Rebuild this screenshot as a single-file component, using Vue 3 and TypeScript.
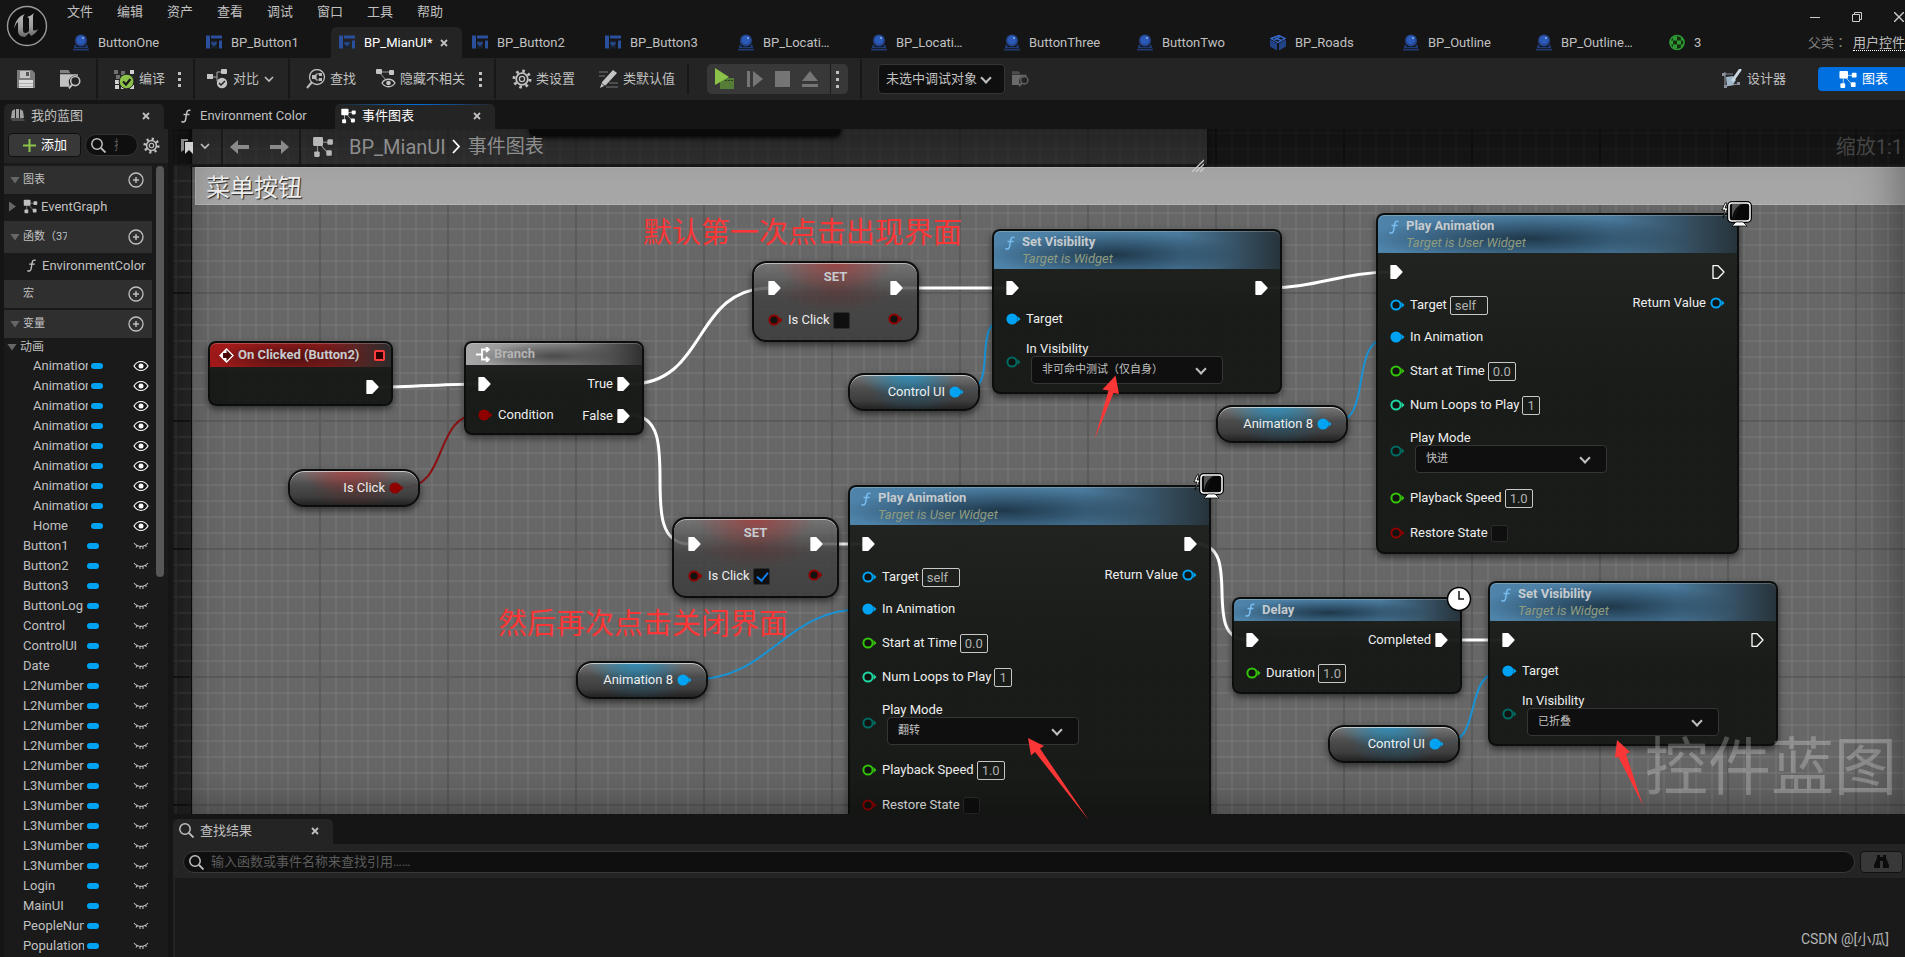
<script setup lang="ts">
import { ref } from 'vue'

type Field =
  | { type: 'text'; value: string; width: number }
  | { type: 'check'; checked: boolean }
  | { type: 'combo'; value: string }

interface Row {
  h: number
  pin: 'exec' | 'data'
  color?: string
  filled?: boolean
  label?: string
  field?: Field
}

interface GraphNode {
  id: string
  kind: 'func' | 'event' | 'branch' | 'set' | 'bool' | 'object'
  x: number
  y: number
  w: number
  h: number
  title?: string
  sub?: string
  badge?: 'client' | 'clock'
  left: Row[]
  right: Row[]
}

const BLUE = '#00a2f2'
const RED = '#8f0000'
const GREEN = '#35c40a'
const MINT = '#20d6a0'
const TEAL = '#006b62'

const menus = ['文件', '编辑', '资产', '查看', '调试', '窗口', '工具', '帮助']
const docTabs = [
  { name: 'ButtonOne', icon: 'actor' },
  { name: 'BP_Button1', icon: 'widget' },
  { name: 'BP_MianUI*', icon: 'widget', active: true },
  { name: 'BP_Button2', icon: 'widget' },
  { name: 'BP_Button3', icon: 'widget' },
  { name: 'BP_Locati…', icon: 'actor' },
  { name: 'BP_Locati…', icon: 'actor' },
  { name: 'ButtonThree', icon: 'actor' },
  { name: 'ButtonTwo', icon: 'actor' },
  { name: 'BP_Roads', icon: 'blueprint' },
  { name: 'BP_Outline', icon: 'actor' },
  { name: 'BP_Outline…', icon: 'actor' },
  { name: '3', icon: 'level' },
]

const animations = [...Array(8).fill('Animation'), 'Home'] as string[]
const variables = [
  'Button1', 'Button2', 'Button3', 'ButtonLog', 'Control', 'ControlUI', 'Date',
  ...Array(5).fill('L2Number'), ...Array(5).fill('L3Number'),
  'Login', 'MainUI', 'PeopleNum', 'Population',
] as string[]

const exec = (filled = true, label?: string, h = 38): Row => ({ h, pin: 'exec', filled, label })

const visibilityNode = (id: string, x: number, y: number, value: string, linked: boolean): GraphNode => ({
  id, kind: 'func', x, y, w: 290, h: 165, title: 'Set Visibility', sub: 'Target is Widget',
  left: [
    exec(),
    { h: 23, pin: 'data', color: BLUE, filled: true, label: 'Target' },
    { h: 62, pin: 'data', color: TEAL, label: 'In Visibility', field: { type: 'combo', value } },
  ],
  right: [exec(linked)],
})

const playNode = (id: string, x: number, y: number, mode: string, linked: boolean): GraphNode => ({
  id, kind: 'func', x, y, w: 363, h: 341, title: 'Play Animation', sub: 'Target is User Widget', badge: 'client',
  left: [
    exec(),
    { h: 28, pin: 'data', color: BLUE, label: 'Target', field: { type: 'text', value: 'self', width: 38 } },
    { h: 36, pin: 'data', color: BLUE, filled: true, label: 'In Animation' },
    { h: 32, pin: 'data', color: GREEN, label: 'Start at Time', field: { type: 'text', value: '0.0', width: 28 } },
    { h: 36, pin: 'data', color: MINT, label: 'Num Loops to Play', field: { type: 'text', value: '1', width: 18 } },
    { h: 58, pin: 'data', color: TEAL, label: 'Play Mode', field: { type: 'combo', value: mode } },
    { h: 34, pin: 'data', color: GREEN, label: 'Playback Speed', field: { type: 'text', value: '1.0', width: 28 } },
    { h: 36, pin: 'data', color: RED, label: 'Restore State', field: { type: 'check', checked: false } },
  ],
  right: [exec(linked), { h: 24, pin: 'data', color: BLUE, label: 'Return Value' }],
})

const setNode = (id: string, x: number, y: number, checked: boolean): GraphNode => ({
  id, kind: 'set', x, y, w: 167, h: 81, title: 'SET',
  left: [exec(true, undefined, 34), { h: 30, pin: 'data', color: RED, label: 'Is Click', field: { type: 'check', checked } }],
  right: [exec(true, undefined, 34), { h: 28, pin: 'data', color: RED }],
})

const getNode = (id: string, kind: 'bool' | 'object', x: number, y: number, label: string): GraphNode => ({
  id, kind, x, y, w: 132, h: 38, left: [],
  right: [{ h: 34, pin: 'data', color: kind === 'bool' ? RED : BLUE, filled: true, label }],
})

const nodes = ref<GraphNode[]>([
  { id: 'click', kind: 'event', x: 208, y: 341, w: 185, h: 65, title: 'On Clicked (Button2)', left: [], right: [exec(true, undefined, 40)] },
  {
    id: 'branch', kind: 'branch', x: 464, y: 341, w: 180, h: 94, title: 'Branch',
    left: [exec(), { h: 24, pin: 'data', color: RED, filled: true, label: 'Condition' }],
    right: [exec(true, 'True'), exec(true, 'False', 26)],
  },
  getNode('isclick', 'bool', 288, 469, 'Is Click'),
  setNode('set1', 752, 261, false),
  getNode('ui1', 'object', 848, 373, 'Control UI'),
  visibilityNode('vis1', 992, 229, '非可命中测试（仅自身）', true),
  getNode('anim1', 'object', 1216, 405, 'Animation 8'),
  playNode('play1', 1376, 213, '快进', false),
  setNode('set2', 672, 517, true),
  getNode('anim2', 'object', 576, 661, 'Animation 8'),
  playNode('play2', 848, 485, '翻转', true),
  {
    id: 'delay', kind: 'func', x: 1232, y: 597, w: 230, h: 97, title: 'Delay', badge: 'clock',
    left: [exec(), { h: 28, pin: 'data', color: GREEN, label: 'Duration', field: { type: 'text', value: '1.0', width: 28 } }],
    right: [exec(true, 'Completed')],
  },
  getNode('ui2', 'object', 1328, 725, 'Control UI'),
  visibilityNode('vis2', 1488, 581, '已折叠', false),
])

interface Wire { from: [number, number]; to: [number, number]; bend: number; color?: string }
const wires: Wire[] = [
  { from: [378, 387], to: [480, 384], bend: 30 },
  { from: [630, 384], to: [770, 288], bend: 78 },
  { from: [630, 415], to: [690, 544], bend: 60 },
  { from: [902, 288], to: [1008, 288], bend: 30 },
  { from: [1267, 288], to: [1392, 272], bend: 50 },
  { from: [822, 544], to: [864, 544], bend: 10 },
  { from: [1196, 544], to: [1248, 640], bend: 50 },
  { from: [1447, 640], to: [1504, 640], bend: 10 },
  { from: [402, 488], to: [480, 414], bend: 48, color: '#8d1010' },
  { from: [962, 392], to: [1008, 319], bend: 42, color: '#1793d6' },
  { from: [1330, 424], to: [1392, 337], bend: 48, color: '#1793d6' },
  { from: [690, 680], to: [864, 609], bend: 82, color: '#1793d6' },
  { from: [1442, 744], to: [1504, 671], bend: 44, color: '#1793d6' },
]
const wirePath = (w: Wire) =>
  `M${w.from[0]} ${w.from[1]}C${w.from[0] + w.bend} ${w.from[1]} ${w.to[0] - w.bend} ${w.to[1]} ${w.to[0]} ${w.to[1]}`
</script>

<template>
  <div class="editor">
    <svg class="defs" aria-hidden="true">
      <symbol id="i-actor" viewBox="0 0 16 17"><path d="M2 10l2 3h8l2-3 2 6.500H0z" fill="#203c78" /><path d="M1 14.500h14" stroke="#151515" stroke-width=".8" /><circle cx="8" cy="6.500" r="6" fill="#25458c" /><circle cx="8" cy="6" r="4.300" fill="#2b5ab8" /><circle cx="10" cy="4" r="1" fill="#8fb0ee" /></symbol>
      <symbol id="i-widget" viewBox="0 0 16 16"><path d="M0 1h4v13H0zM5 1h11v3H5zM13 6h3v8h-3z" fill="#2a4f9c" /><path d="M5 6h6v8H5z" fill="#19202e" /><path d="M8 12L5 9l1-2 2 1 2-1 1 2z" fill="#264789" /></symbol>
      <symbol id="i-blueprint" viewBox="0 0 16 16"><path d="M0 5l7 4v7l-7-4zM16 5L9 9v7l7-4z" fill="#234387" /><path d="M1 4l8-3 6 3-7 4zM5 3l6 3M10 2L4 6" fill="none" stroke="#3668cc" stroke-width="1.4" /></symbol>
      <symbol id="i-level" viewBox="0 0 16 16"><circle cx="8" cy="8" r="7" fill="#14300f" stroke="#2f9a35" stroke-width="1.6" /><path d="M4 2h4v4H4zM8 6h4v4H8zM4 10h4v4H4zM1 6h3v4H1zM12 2l3 4h-3zM12 10h3l-3 4z" fill="#2f9a35" /></symbol>
      <symbol id="i-close" viewBox="0 0 8 8"><path d="M1 1l6 6M7 1L1 7" stroke="currentColor" stroke-width="1.8" /></symbol>
      <symbol id="i-chev" viewBox="0 0 10 7"><path d="M1 1l4 4 4-4" fill="none" stroke="currentColor" stroke-width="1.6" /></symbol>
      <symbol id="i-search" viewBox="0 0 15 15"><circle cx="6" cy="6" r="5.200" fill="none" stroke="currentColor" stroke-width="1.500" /><path d="M10 10l4.500 4.500" stroke="currentColor" stroke-width="1.800" /></symbol>
      <symbol id="i-gear" viewBox="0 0 20 20"><circle cx="10" cy="10" r="8" fill="none" stroke="currentColor" stroke-width="3" stroke-dasharray="2.600 3.680" /><circle cx="10" cy="10" r="5.800" fill="none" stroke="currentColor" stroke-width="1.800" /><circle cx="10" cy="10" r="2.600" fill="none" stroke="currentColor" stroke-width="1.300" /></symbol>
      <symbol id="i-graph" viewBox="0 0 20 20"><path d="M5 5l11 1M5 5v11M5 5l10 11" stroke="currentColor" stroke-width="1" opacity=".7" /><rect x="1" y="1" width="9" height="8" rx="1" fill="currentColor" /><rect x="14" y="3" width="5" height="5" rx="1" fill="currentColor" /><rect x="2" y="14" width="5" height="5" rx="1" fill="currentColor" /><rect x="13" y="13" width="5" height="5" rx="1" fill="currentColor" /></symbol>
      <symbol id="i-func" viewBox="0 0 10 14"><path d="M9.500 1.500C7 .5 6 2 5.700 4L4.600 10.500C4.200 13 2.500 13.500.5 12.500M2.500 5.500h6" fill="none" stroke="currentColor" stroke-width="1.500" /></symbol>
      <symbol id="i-folder" viewBox="0 0 20 18"><path d="M0 0h8l2 3H0z" fill="currentColor" opacity=".6" /><path d="M0 4h17v2a6 6 0 0 0-8 8v2H0z" fill="currentColor" /><circle cx="14.500" cy="10.500" r="4.300" fill="none" stroke="currentColor" stroke-width="1.500" /><path d="M12 13.500L8.500 17.500" stroke="currentColor" stroke-width="1.800" /></symbol>
      <symbol id="i-plus" viewBox="0 0 16 16"><circle cx="8" cy="8" r="7" fill="none" stroke="currentColor" stroke-width="1.300" /><path d="M8 5v6M5 8h6" stroke="currentColor" stroke-width="1.400" /></symbol>
      <symbol id="i-eye" viewBox="0 0 16 12"><path d="M1 6C4.500 0 11.500 0 15 6C11.500 12 4.500 12 1 6z" fill="none" stroke="#fff" stroke-width="1.200" /><circle cx="8" cy="6" r="2.500" fill="#fff" /></symbol>
      <symbol id="i-lid" viewBox="0 0 16 8"><path d="M1 1C4.500 5.500 11.500 5.500 15 1M4 3.500L3 5.500M7 4.500V7M10 4.500V7M12.500 3.500L13.500 5" fill="none" stroke="#c0c0c0" stroke-width="1.100" /></symbol>
      <symbol id="i-arrow" viewBox="0 0 20 16"><path d="M0 8l8-7v5h11v4H8v5z" fill="currentColor" /></symbol>
    </svg>

    <header class="top">
      <svg class="logo" viewBox="0 0 42 42">
        <defs><linearGradient id="steel" x1="0" y1="0" x2="0" y2="1"><stop offset="0" stop-color="#b8b8b8" /><stop offset=".6" stop-color="#999" /><stop offset="1" stop-color="#666" /></linearGradient></defs>
        <circle cx="21" cy="21" r="19.500" fill="#0f0f0f" stroke="#9a9a9a" stroke-width="1.400" />
        <path d="M8 24C9 16 13 11 19 9c-1 1-2 2-2 4v12c0 2 1 3 2 3 2 0 3-1 4-2V14c0-1-1-2-2-2 3-1 5-2 7-4-1 2-1 3-1 5v11c0 2 2 2 5 0-2 4-5 6-7 7l-2-3-4 4C14 32 12 29 12 26V18c0-2-2 1-4 6z" fill="url(#steel)" />
      </svg>
      <div class="top-main">
        <nav class="menu">
          <button v-for="m in menus" :key="m" type="button">{{ m }}</button>
          <div class="win">
            <button type="button" aria-label="最小化"><svg width="10" height="10"><path d="M0 5.500h10" stroke="#ccc" /></svg></button>
            <button type="button" aria-label="还原"><svg width="10" height="10"><path d="M2.500 2.500v-2h7v7h-2M.5 2.500h7v7h-7z" fill="none" stroke="#ccc" /></svg></button>
            <button type="button" aria-label="关闭"><svg width="10" height="10"><path d="M0 0l10 10M10 0L0 10" stroke="#ccc" stroke-width="1.400" /></svg></button>
          </div>
        </nav>
        <div class="docs">
          <button v-for="(t, i) in docTabs" :key="i" type="button" class="doc" :class="{ active: t.active }">
            <svg width="16" height="17"><use :href="'#i-' + t.icon" /></svg>
            <span>{{ t.name }}</span>
            <svg v-if="t.active" class="x" width="8" height="8"><use href="#i-close" /></svg>
          </button>
          <div class="parent"><span>父类：</span><a href="#">用户控件</a></div>
        </div>
      </div>
    </header>

    <div class="toolbar">
      <div class="grp g1">
        <button type="button" aria-label="保存"><svg width="18" height="18"><path d="M0 0h15l3 3v15H0z" fill="#7c7c7c" /><path d="M3 1h10v7H3z" fill="#c4c4c4" /><path d="M9 2h3v4H9z" fill="#555" /><path d="M2 10h14v8H2z" fill="#dcdcdc" /><path d="M2 13.500h14M2 16.500h14" stroke="#b0b0b0" /></svg></button>
        <button type="button" aria-label="浏览"><svg width="21" height="19"><use href="#i-folder" /></svg></button>
      </div>
      <div class="grp g2">
        <button type="button"><svg width="21" height="21"><path d="M0 1h4v4H0zM7 2h4v4H7zM2 6h4v4H2z" fill="#707070" /><path d="M16 1h4v4h-4zM1 11h4v4H1zM1 16h4v4H1zM7 16h4v4H7zM16 16h4v4h-4z" fill="#d0d0d0" /><circle cx="12.500" cy="12.500" r="7.300" fill="#8bc34a" stroke="#242424" /><path d="M9 12.500l3 3 4.500-5.500" fill="none" stroke="#1a1a1a" stroke-width="2.200" /></svg>编译</button>
        <svg width="4" height="16"><path d="M0 1h3v3H0zM0 7h3v3H0zM0 13h3v3H0z" fill="#c0c0c0" /></svg>
      </div>
      <div class="grp g3">
        <button type="button"><svg width="22" height="20"><path d="M5 8h5V3h5M10 8v4" fill="none" stroke="#aaa" /><rect y="5" width="6" height="5" fill="#c4c4c4" /><rect x="14" width="6" height="5" rx="1" fill="#c4c4c4" /><circle cx="15" cy="14" r="5.200" fill="#c4c4c4" /><path d="M12 14l2 2 4-4" fill="none" stroke="#222" stroke-width="1.500" /></svg>对比<svg class="cv" width="10" height="7"><use href="#i-chev" /></svg></button>
      </div>
      <div class="grp g4">
        <button type="button"><svg width="20" height="20"><circle cx="11" cy="8" r="7.500" fill="none" stroke="#bbb" stroke-width="1.300" /><path d="M6 13l-5 6" stroke="#bbb" stroke-width="2" /><path d="M7 8h3M10 5h4M10 11h4M10 5v6" fill="none" stroke="#bbb" stroke-width="1.200" /><path d="M6 6h4v4H6zM13 4h3v3h-3zM13 9h3v3h-3z" fill="#bbb" /></svg>查找</button>
        <button type="button"><svg width="20" height="20"><path d="M3 3h14M3 3l7 8" stroke="#999" /><rect width="6" height="5" rx="1" fill="#c4c4c4" /><rect x="13" y="1" width="5" height="5" rx="1" fill="#c4c4c4" /><path d="M6 14c3-5 10-5 13 0-3 5-10 5-13 0z" fill="#222" stroke="#c4c4c4" stroke-width="1.300" /><circle cx="12.500" cy="14" r="2.300" fill="#c4c4c4" /></svg>隐藏不相关</button>
        <svg width="4" height="16"><path d="M0 1h3v3H0zM0 7h3v3H0zM0 13h3v3H0z" fill="#c0c0c0" /></svg>
      </div>
      <div class="grp g5">
        <button type="button"><svg width="20" height="20"><use href="#i-gear" /></svg>类设置</button>
        <button type="button"><svg width="20" height="20"><path d="M0 3h9M0 7h6M10 14h9M7 18h12" stroke="#777" /><path d="M14 1l4 3L7 16l-6 3 2-6z" fill="#c4c4c4" /><path d="M2 14l4 3" stroke="#444" /></svg>类默认值</button>
      </div>
      <div class="play">
        <button type="button" aria-label="播放"><svg width="20" height="22"><path d="M5 10h14v11H5z" fill="#567d38" /><path d="M0 0l14 9L0 17z" fill="#8bc34a" /><path d="M10 12.500h9" stroke="#2c3a22" stroke-dasharray="2 1" /></svg></button>
        <button type="button" aria-label="步进"><svg width="16" height="16"><path d="M0 0h3v16H0zM6 0l10 8-10 8z" fill="#757575" /></svg></button>
        <button type="button" aria-label="停止"><svg width="15" height="16"><path d="M0 0h15v16H0z" fill="#757575" /></svg></button>
        <button type="button" aria-label="弹出"><svg width="16" height="16"><path d="M8 0l8 10H0zM0 13h16v3H0z" fill="#757575" /></svg></button>
        <button type="button" class="more" aria-label="选项"><svg width="4" height="18"><path d="M0 1h3v3H0zM0 8h3v3H0zM0 15h3v3H0z" fill="#c0c0c0" /></svg></button>
      </div>
      <div class="debug">
        <label class="combo big"><select aria-label="调试对象"><option>未选中调试对象</option></select></label>
        <svg class="dim" width="17" height="16"><use href="#i-folder" /></svg>
      </div>
      <div class="modes">
        <button type="button"><svg width="21" height="20"><path d="M1 5h10M3 3v14l13-2" fill="none" stroke="#8a919a" stroke-width="1.200" /><path d="M0 4h3v3H0zM2 16h3v3H2zM15 13h3v3h-3z" fill="#8a919a" /><path d="M4 8l7-1 3 4-3 5-6 1z" fill="#9fb6c8" /><path d="M11 11l7-10" stroke="#ccd8e2" stroke-width="3" stroke-linecap="round" /></svg>设计器</button>
        <button type="button" class="on"><svg width="20" height="19"><use href="#i-graph" /></svg>图表</button>
      </div>
    </div>

    <main class="main">
      <aside class="side">
        <div class="ptab">
          <svg width="15" height="15"><path d="M2 3l3-2v9H1zM6 1h3v9H6zM10 1l3 2 1 7h-4z" fill="#a2a2a2" /><path d="M0 10h12l3 2-1 1H2z" fill="#4c4c4c" /></svg>
          <span>我的蓝图</span><svg class="x" width="8" height="8"><use href="#i-close" /></svg>
        </div>
        <div class="side-tools">
          <button type="button" class="add"><svg width="13" height="13"><path d="M6.500 0v13M0 6.500h13" stroke="#8bc34a" stroke-width="2" /></svg>添加</button>
          <label class="find"><svg width="15" height="15"><use href="#i-search" /></svg><input type="text" aria-label="搜索" placeholder="搜索" /></label>
          <svg class="gear" width="17" height="17"><use href="#i-gear" /></svg>
        </div>
        <div class="side-body">
          <div class="tree">
            <div class="cat"><i class="tri" /><span>图表</span><button type="button" aria-label="添加图表"><svg width="16" height="16"><use href="#i-plus" /></svg></button></div>
            <div class="leaf"><i class="tri side-tri" /><svg width="15" height="15"><use href="#i-graph" /></svg><span>EventGraph</span></div>
            <div class="cat tall"><i class="tri" /><span>函数（37可覆盖）</span><button type="button" aria-label="添加函数"><svg width="16" height="16"><use href="#i-plus" /></svg></button></div>
            <div class="leaf"><i class="tri none" /><svg width="15" height="13"><use href="#i-func" /></svg><span>EnvironmentColor</span></div>
            <div class="cat"><i class="tri none" /><span>宏</span><button type="button" aria-label="添加宏"><svg width="16" height="16"><use href="#i-plus" /></svg></button></div>
            <div class="cat last"><i class="tri" /><span>变量</span><button type="button" aria-label="添加变量"><svg width="16" height="16"><use href="#i-plus" /></svg></button></div>
            <div class="sub"><i class="tri" /><span>动画</span></div>
            <div v-for="(v, i) in animations" :key="'a' + i" class="var nested"><span>{{ v }}</span><b /><svg width="16" height="12"><use href="#i-eye" /></svg></div>
            <div v-for="(v, i) in variables" :key="'v' + i" class="var"><span>{{ v }}</span><b /><svg width="16" height="8"><use href="#i-lid" /></svg></div>
          </div>
          <div class="bar" />
        </div>
      </aside>

      <section class="work">
        <div class="gtabs">
          <button type="button" class="gtab plain"><svg width="10" height="14"><use href="#i-func" /></svg><span>Environment Color</span></button>
          <button type="button" class="gtab cur"><svg width="17" height="16"><use href="#i-graph" /></svg><span>事件图表</span><svg class="x" width="8" height="8"><use href="#i-close" /></svg></button>
        </div>

        <div class="canvas">
          <div class="world">
            <div class="comment upper" />
            <div class="stub" />
            <div class="comment lower"><h2>菜单按钮</h2></div>
            <svg class="wires" width="1920" height="830">
              <path v-for="(w, i) in wires" :key="i" :d="wirePath(w)" fill="none" :stroke="w.color || '#fff'" :stroke-width="w.color ? 2 : 3" />
            </svg>
            <article v-for="n in nodes" :key="n.id" class="node" :class="n.kind" :style="{ left: n.x + 'px', top: n.y + 'px', width: n.w + 'px', height: n.h + 'px' }">
              <header v-if="n.title" :class="{ two: n.sub }">
                <svg v-if="n.kind === 'func'" class="fi" width="10" height="14"><use href="#i-func" /></svg>
                <svg v-if="n.kind === 'event'" width="15" height="15"><path d="M7.500 1L14 7.500 7.500 14 1 7.500z" fill="#4a0808" stroke="#fff" stroke-width="1.300" /><path d="M7.500 1v4L4 5v5l3.500 0v4L1 7.500z" fill="#fff" /></svg>
                <svg v-if="n.kind === 'branch'" width="14" height="15"><path d="M0 7.500h6M12 2.500H6v10h6M10 0l3 2.500L10 5M10 10l3 2.500-3 2.500" fill="none" stroke="#fff" stroke-width="1.800" /></svg>
                <div><strong>{{ n.title }}</strong><em v-if="n.sub">{{ n.sub }}</em></div>
                <i v-if="n.kind === 'event'" class="delegate" />
              </header>
              <div class="pins">
                <div v-for="side in (['left', 'right'] as const)" :key="side" class="col" :class="side">
                  <div v-for="(r, i) in n[side]" :key="i" class="row" :class="{ bottom: r.field?.type === 'combo' }" :style="{ height: r.h + 'px' }">
                    <svg v-if="r.pin === 'exec'" class="pin" width="13" height="14"><path d="M1 .7h5L12 7 6 13.300H1z" :fill="r.filled ? '#fff' : 'none'" stroke="#fff" stroke-width="1.300" stroke-linejoin="round" /></svg>
                    <svg v-else class="pin" width="15" height="12"><circle cx="6" cy="6" r="4.600" :stroke="r.color" stroke-width="2" :fill="r.filled ? r.color : '#101310'" /><path d="M11.500 3l3 3-3 3z" :fill="r.color" /></svg>
                    <label v-if="r.label" :class="{ stacked: r.field?.type === 'combo' }">
                      <span>{{ r.label }}</span>
                      <input v-if="r.field?.type === 'text'" v-model="r.field.value" type="text" class="tx" :style="{ width: r.field.width + 'px' }" />
                      <input v-else-if="r.field?.type === 'check'" v-model="r.field.checked" type="checkbox" class="ck" />
                      <span v-else-if="r.field?.type === 'combo'" class="combo"><select><option>{{ r.field.value }}</option></select></span>
                    </label>
                  </div>
                </div>
              </div>
              <svg v-if="n.badge === 'client'" class="badge client" width="32" height="28"><path d="M5 3L2 10h3l-2 8 5-10H5l2-5z" fill="#fff" stroke="#000" stroke-width=".8" /><rect x="9" y="3" width="21" height="18" rx="3" fill="#050505" stroke="#000" stroke-width="4" /><rect x="9" y="3" width="21" height="18" rx="3" fill="#080808" stroke="#fff" stroke-width="1.500" /><path d="M12 19c1-7 4-12 9-15h-9z" fill="#555" /><path d="M14 19c1-6 3-11 8-15" stroke="#1a1a1a" fill="none" /><path d="M16 22h7l4 4H12z" fill="#fff" stroke="#000" stroke-width=".7" /></svg>
              <svg v-if="n.badge === 'clock'" class="badge clock" width="26" height="26"><circle cx="13" cy="13" r="11.500" fill="#fff" stroke="#000" stroke-width="1.500" /><path d="M13 5v8h5" fill="none" stroke="#111" stroke-width="1.500" /></svg>
            </article>
          </div>
          <div class="vignette" />
          <nav class="crumbs">
            <button type="button" class="mark" aria-label="书签"><svg width="14" height="17"><path d="M1 1h7v2H4v9l-3 2z" fill="#888" /><path d="M5 4h8v12l-4-4-4 4z" fill="#d0d0d0" /></svg><svg width="10" height="7"><use href="#i-chev" /></svg></button>
            <button type="button" class="nav" aria-label="后退"><svg width="20" height="16"><use href="#i-arrow" /></svg></button>
            <button type="button" class="nav fwd" aria-label="前进"><svg width="20" height="16"><use href="#i-arrow" /></svg></button>
            <div class="path"><svg width="24" height="22"><use href="#i-graph" /></svg><a href="#">BP_MianUI</a><svg class="gt" width="9" height="15"><path d="M1 1l6 6.500L1 14" fill="none" stroke="#fff" stroke-width="1.800" /></svg><a href="#">事件图表</a></div>
            <span class="zoom">缩放1:1</span>
          </nav>
          <svg class="grip" width="13" height="13"><path d="M1 13L13 1M5 13l8-8M9 13l4-4" stroke="#ccc" stroke-width="1.300" /></svg>
          <div class="kind">控件蓝图</div>
        </div>

        <div class="results">
          <div class="rtabs"><div class="ptab"><svg width="15" height="15"><use href="#i-search" /></svg><span>查找结果</span><svg class="x" width="8" height="8"><use href="#i-close" /></svg></div></div>
          <div class="rsearch">
            <label><svg width="15" height="15"><use href="#i-search" /></svg><input type="text" aria-label="查找引用" placeholder="输入函数或事件名称来查找引用……" /></label>
            <button type="button" aria-label="查找"><svg width="15" height="14"><path d="M3 0h3v2h3V0h3v3l3 7v3H9V6H6v7H0v-3l3-7z" fill="#0c0c0c" /></svg></button>
          </div>
          <div class="rbody" />
        </div>
      </section>
    </main>

    <div class="notes">
      <p class="n1">默认第一次点击出现界面</p>
      <p class="n2">然后再次点击关闭界面</p>
      <svg width="1700" height="830"><path d="M1115.500 375.500l3.500 18.500-5.500-1L1094.500 439.500l14-49-6-1zM1028 738l16 8-4 2.500L1089 820.500 1035 752l-4 3.500zM1617 740l13 12-4 2L1643 805.500 1618.500 757l-3.500.5z" fill="#fb3636" /></svg>
      <p class="sign">CSDN @[小瓜]</p>
    </div>
  </div>
</template>

<style>
body { background: #151515; overflow: hidden; }
</style>

<style scoped>
.editor { position: relative; display: flex; flex-direction: column; height: 100vh; overflow: hidden; background: #151515; color: #c0c0c0; font: 13px/16px Roboto, "Noto Sans CJK SC", sans-serif; }
.editor * { box-sizing: border-box; }
.defs { position: absolute; width: 0; height: 0; }
button { display: flex; align-items: center; padding: 0; border: 0; background: none; color: inherit; font: inherit; white-space: nowrap; }
input, select { font: inherit; color: inherit; outline: 0; }
a { color: inherit; text-decoration: none; }
svg { flex: none; }

.top { display: flex; flex: none; height: 58px; }
.logo { width: 42px; height: 42px; margin: 5px 0 0 6px; }
.top-main { flex: 1; min-width: 0; margin-left: 17px; }
.menu { display: flex; height: 27px; padding-left: 2px; }
.menu > button { width: 50px; height: 23px; }
.win { display: flex; gap: 32px; margin-left: auto; padding: 6px 1px 0 0; }
.docs { display: flex; height: 31px; }
.doc { flex: 0 1 133px; min-width: 0; padding-left: 8px; }
.doc span { margin-left: 9px; }
.doc.active { flex-basis: 131px; margin-right: 2px; background: #242424; border-radius: 6px 6px 0 0; color: #fff; }
.doc.active .x { margin-left: auto; margin-right: 14px; color: #c0c0c0; }
.parent { display: flex; align-items: center; flex: 1 0 0; min-width: 98px; justify-content: flex-end; white-space: nowrap; color: #808080; }
.parent span { margin-right: 6px; font-family: Roboto, "Noto Sans CJK TC", sans-serif; }
.parent a { color: #c0c0c0; border-bottom: 1px dotted #fff; line-height: 15px; }

.toolbar { display: flex; flex: none; align-items: center; height: 42px; background: #242424; }
.toolbar button { gap: 4px; }
.grp { display: flex; align-items: center; height: 40px; border-right: 2px solid #171717; }
.g1 { width: 98px; padding-left: 17px; gap: 25px; }
.g2 { width: 97px; padding-left: 16px; gap: 13px; }
.g3 { width: 95px; padding-left: 12px; }
.g3 .cv { margin-left: 1px; }
.g4 { width: 206px; padding-left: 16px; }
.g4 button { margin-right: 20px; }
.g4 button + button { margin-right: 14px; }
.g5 { width: 193px; height: 30px; padding-left: 16px; gap: 24px; }
.play { display: flex; width: 141px; height: 30px; margin-left: 18px; background: #383838; border-radius: 5px; padding-left: 8px; gap: 12px; }
.play .more { margin-left: auto; width: 23px; padding-right: 4px; justify-content: center; border-left: 1px solid #1c1c1c; }
.debug { display: flex; align-items: center; height: 40px; margin-left: 12px; padding-left: 16px; border-left: 2px solid #171717; gap: 7px; }
.dim { opacity: .45; }
.modes { display: flex; align-items: center; margin-left: auto; gap: 32px; }
.modes .on { width: 87px; height: 24px; padding-left: 20px; background: #0070e0; color: #fff; border-radius: 4px 0 0 4px; }

.combo { position: relative; display: block; width: 192px; height: 28px; }
.combo select { appearance: none; width: 100%; height: 100%; padding: 0 24px 0 10px; background: #0f0f0f; border: 1px solid #353535; border-radius: 4px; font-size: 11px; color: #c0c0c0; }
.combo::after { content: ""; position: absolute; right: 18px; top: 9px; width: 6px; height: 6px; border: solid #c0c0c0; border-width: 0 2px 2px 0; transform: rotate(45deg); }
.combo.big { width: 127px; height: 30px; }
.combo.big select { padding: 0 0 0 7px; font-size: 13px; }
.combo.big::after { right: 15px; top: 10px; }

.main { display: flex; flex: 1; min-height: 0; }
.side { display: flex; flex-direction: column; flex: none; width: 164px; margin-left: 4px; padding-top: 4px; }
.ptab { display: flex; align-items: center; flex: none; width: 160px; height: 25px; padding: 0 14px 2px 6px; background: #242424; border-radius: 5px 5px 0 0; }
.ptab span { margin-left: 6px; }
.ptab .x { margin-left: auto; }
.side-tools { display: flex; flex: none; align-items: center; height: 35px; padding: 0 4px 2px; background: #242424; border-bottom: 1px solid #1a1a1a; }
.add { width: 73px; height: 24px; padding-left: 14px; gap: 5px; background: #383838; border: 1px solid #101010; border-radius: 4px; color: #fff; }
.find { display: flex; align-items: center; width: 53px; height: 22px; margin-left: 4px; padding-left: 5px; gap: 8px; background: #0f0f0f; border: 1px solid #333; border-radius: 11px; }
.find input { width: 4px; min-width: 0; padding: 0; border: 0; background: none; }
.find input::placeholder { color: #555; }
.gear { margin-left: 5px; }
.side-body { display: flex; flex: 1; min-height: 0; padding-top: 2px; background: #1a1a1a; }
.tree { width: 148px; flex: none; overflow: hidden; }
.bar { width: 8px; height: 411px; margin-left: 4px; background: #575757; border-radius: 4px; }
.cat { display: flex; align-items: center; height: 28px; padding-left: 6px; background: #2f2f2f; font-size: 11px; }
.cat span { width: 44px; margin-left: 3px; overflow: hidden; white-space: nowrap; }
.cat button { margin-left: auto; margin-right: 8px; }
.cat.tall { height: 32px; }
.cat.last { margin-top: 2px; }
.tri { width: 10px; height: 7px; background: #666; clip-path: polygon(0 0, 100% 0, 50% 100%); }
.tri.none { visibility: hidden; }
.tri.side-tri { width: 7px; height: 10px; margin-right: 2px; clip-path: polygon(0 0, 100% 50%, 0 100%); }
.leaf { display: flex; align-items: center; height: 27px; padding: 0 0 2px 5px; white-space: nowrap; }
.leaf svg { margin-left: 5px; }
.leaf span { margin-left: 3px; }
.sub { display: flex; align-items: center; height: 18px; padding-left: 3px; font-size: 12px; }
.sub span { margin-left: 3px; }
.var { display: flex; align-items: center; height: 20px; padding: 0 3px 0 19px; }
.var span { width: 61px; overflow: hidden; white-space: nowrap; }
.var b { width: 12px; height: 6px; margin-left: 3px; background: #00a2f2; border-radius: 3px; }
.var svg { margin-left: auto; }
.var.nested { padding-left: 29px; }
.var.nested span { width: 55px; }

.work { display: flex; flex: 1; flex-direction: column; min-width: 0; margin-left: 5px; }
.gtabs { display: flex; flex: none; height: 29px; padding-top: 4px; }
.gtab { padding-bottom: 2px; }
.gtab.plain { width: 162px; padding-left: 8px; gap: 9px; }
.gtab.cur { width: 160px; padding: 0 14px 2px 5px; background: linear-gradient(90deg, #242424, #0070e0 50%, #242424) top / 100% 1px no-repeat, #242424; border-radius: 5px 5px 0 0; color: #fff; }
.gtab.cur span { margin-left: 5px; }
.gtab .x { margin-left: auto; color: #c0c0c0; }

.canvas { position: relative; flex: 1; min-height: 0; overflow: hidden; background:
  linear-gradient(90deg, #151515 2px, transparent 2px) 18px 0 / 128px 128px,
  linear-gradient(#151515 2px, transparent 2px) 0 35px / 128px 128px,
  linear-gradient(90deg, #343434 2px, transparent 2px) 2px 0 / 16px 16px,
  linear-gradient(#343434 2px, transparent 2px) 0 3px / 16px 16px, #262626; }
.world { position: absolute; left: -173px; top: -129px; right: 0; bottom: 0; }
.comment { position: absolute; left: 191px; background: rgba(255, 255, 255, .3); border-left: 1px solid #0c0c0c; }
.comment.upper { top: 100px; width: 1016px; height: 66px; box-shadow: 0 0 8px #000; }
.comment.lower { top: 167px; right: -40px; bottom: -40px; }
.comment h2 { height: 38px; margin: 0 0 0 3px; padding: 4px 0 0 10px; background: #a6a6a6; border: 1px solid #b4b4b4; border-width: 1px 0 1px 1px; font-size: 24px; line-height: 32px; font-weight: 400; color: #eee; text-shadow: 1px 1px 1px #222; }
.stub { position: absolute; left: 529px; top: 110px; width: 312px; height: 26px; background: #0b0b0b; border-radius: 6px; box-shadow: 0 2px 5px #000; }
.wires { position: absolute; left: 0; top: 0; }

.node { position: absolute; display: flex; flex-direction: column; background: linear-gradient(rgba(30, 33, 30, .94), rgba(22, 25, 22, .97) 50%); border: 2px solid #0c0e0d; border-radius: 8px; box-shadow: 0 3px 7px rgba(0, 0, 0, .55); color: #eee; }
.node header { display: flex; align-items: center; flex: none; height: 22px; padding-left: 10px; border-radius: 6px 6px 0 0; box-shadow: inset 0 1px rgba(255, 255, 255, .22); }
.node header strong { display: block; font-weight: 700; line-height: 16px; color: #c6cbce; }
.node header em { display: block; line-height: 17px; color: #8f9c80; }
.func header { background: radial-gradient(ellipse 45% 60% at 42% 62%, rgba(28, 52, 70, .95), transparent), linear-gradient(90deg, #4e83aa, #4a7a9c 65%, #27333b); }
.func header.two { height: 38px; align-items: flex-start; padding-top: 3px; }
.func header > div { margin-left: 7px; }
.fi { color: #78bdf0; margin-left: 1px; }
.two .fi { margin-top: 2px; }
.event header { height: 24px; background: radial-gradient(ellipse 45% 70% at 45% 60%, rgba(70, 15, 15, .9), transparent), linear-gradient(90deg, #a51a1a, #8e1c1c 60%, #2c2c2c); padding-left: 9px; padding-right: 6px; }
.event header > div { margin-left: 4px; }
.delegate { width: 11px; height: 11px; margin-left: auto; border: 2px solid #ff3a3a; border-radius: 2px; background: #2a0000; }
.branch header { background: radial-gradient(ellipse 45% 60% at 50% 60%, rgba(60, 60, 60, .8), transparent), linear-gradient(90deg, #a8a8a8, #808080 60%, #303030); }
.branch header > div { margin-left: 4px; }
.branch header strong { color: #b4b4b4; }
.pins { display: flex; justify-content: space-between; }
.col { display: flex; flex-direction: column; }
.row { display: flex; align-items: center; gap: 5px; white-space: nowrap; }
.left { padding-left: 12px; }
.right { padding-right: 12px; }
.right .row { flex-direction: row-reverse; gap: 4px; }
.row.bottom { align-items: flex-end; padding-bottom: 8px; }
.row.bottom .pin { margin-bottom: 16px; }
.row label { display: flex; align-items: center; gap: 3px; }
.row label.stacked { display: block; line-height: 14px; }
.row .combo { margin-left: 5px; }
.tx { height: 19px; padding: 0 0 0 4px; background: transparent; border: 1px solid #c8c8c8; border-radius: 2px; color: #b0b0b0; }
.ck { appearance: none; width: 17px; height: 17px; margin: 0; background: #0f0f0f; border: 1px solid #2c2c2c; border-radius: 2px; }
.ck:checked::after { content: ""; display: block; width: 5px; height: 9px; margin: 1px 0 0 5px; border: solid #1080f0; border-width: 0 2px 2px 0; transform: rotate(40deg); }
.set { display: grid; border-radius: 14px; background: radial-gradient(ellipse 60px 28px at 50% 0, rgba(170, 50, 50, .7), transparent), radial-gradient(ellipse 60px 22px at 50% 28px, rgba(110, 35, 35, .35), transparent), linear-gradient(rgba(120, 120, 120, .75), rgba(66, 66, 66, .86) 45%, rgba(60, 60, 60, .88)); box-shadow: inset 0 1px rgba(255, 255, 255, .5), 0 3px 7px rgba(0, 0, 0, .55); }
.set header { grid-area: 1 / 1; height: 28px; justify-content: center; padding: 0; box-shadow: none; }
.set .pins { grid-area: 1 / 1; padding-top: 8px; }
.set .left { padding-left: 14px; }
.set .right { padding-right: 14px; }
.bool, .object { border-radius: 16px; background: radial-gradient(ellipse 50px 22px at 45% 0, rgba(180, 55, 55, .65), transparent), radial-gradient(ellipse 45px 22px at 50% 50%, rgba(120, 30, 30, .35), transparent), linear-gradient(rgba(120, 120, 120, .9), rgba(74, 74, 74, .92) 40%, rgba(58, 58, 58, .92) 75%, #222); box-shadow: inset 0 1px rgba(255, 255, 255, .6), 0 3px 7px rgba(0, 0, 0, .55); }
.object { background: radial-gradient(ellipse 50px 22px at 45% 0, rgba(40, 150, 200, .8), transparent), radial-gradient(ellipse 45px 22px at 50% 50%, rgba(30, 90, 120, .6), transparent), linear-gradient(rgba(120, 120, 120, .9), rgba(74, 74, 74, .92) 40%, rgba(58, 58, 58, .92) 75%, #222); }
.bool .right, .object .right { padding-right: 14px; }
.badge { position: absolute; }
.client { right: -15px; top: -15px; }
.clock { right: -12px; top: -13px; }

.vignette { position: absolute; inset: 0; pointer-events: none; box-shadow: inset 0 0 50px rgba(0, 0, 0, .45); }
.crumbs { position: absolute; left: 0; right: 0; top: 0; display: flex; align-items: center; height: 37px; background: rgba(12, 12, 12, .62); border-bottom: 2px solid #181818; color: #a0a0a0; font-size: 20px; }
.mark { width: 50px; height: 35px; padding-left: 7px; gap: 6px; border-right: 2px solid #1a1a1a; color: #c0c0c0; }
.nav { width: 39px; height: 35px; padding-left: 7px; color: #8a8a8a; }
.fwd { border-right: 2px solid #1a1a1a; }
.fwd svg { transform: scaleX(-1); }
.path { display: flex; align-items: center; padding-left: 10px; white-space: nowrap; }
.path > svg:first-child { color: #b8b8b8; margin-right: 14px; }
.path a { color: #8e8e8e; }
.path a:last-child { font-size: 19px; }
.gt { margin: 0 7px 0 6px; }
.zoom { margin-left: auto; margin-right: 2px; color: #444; }
.grip { position: absolute; left: 1018px; top: 30px; }
.kind { position: absolute; right: 8px; bottom: 14px; font-size: 63px; line-height: 64px; color: rgba(255, 255, 255, .24); pointer-events: none; }

.results { flex: none; height: 143px; display: flex; flex-direction: column; }
.rtabs { height: 30px; padding-top: 5px; }
.rsearch { display: flex; align-items: center; height: 34px; padding: 2px 2px 0 10px; gap: 5px; background: #242424; }
.rsearch label { display: flex; flex: 1; align-items: center; height: 22px; padding-left: 5px; gap: 7px; background: #0f0f0f; border: 1px solid #383838; border-radius: 11px; }
.rsearch input { flex: 1; min-width: 0; padding: 0; border: 0; background: none; }
.rsearch input::placeholder { color: #5c5c5c; }
.rsearch button { width: 43px; height: 22px; justify-content: center; background: #383838; border: 1px solid #111; border-radius: 4px; }
.rbody { flex: 1; background: #1a1a1a; border-left: 2px solid #242424; }

.notes { position: absolute; inset: 0; overflow: hidden; pointer-events: none; }
.notes p { position: absolute; margin: 0; white-space: nowrap; font-size: 29px; line-height: 40px; color: #fb3636; }
.notes .n1 { left: 643px; top: 213px; }
.notes .n2 { left: 498px; top: 604px; }
.notes .sign { right: 16px; bottom: 8px; font-size: 14px; line-height: 20px; color: #b4b4b4; }
</style>
